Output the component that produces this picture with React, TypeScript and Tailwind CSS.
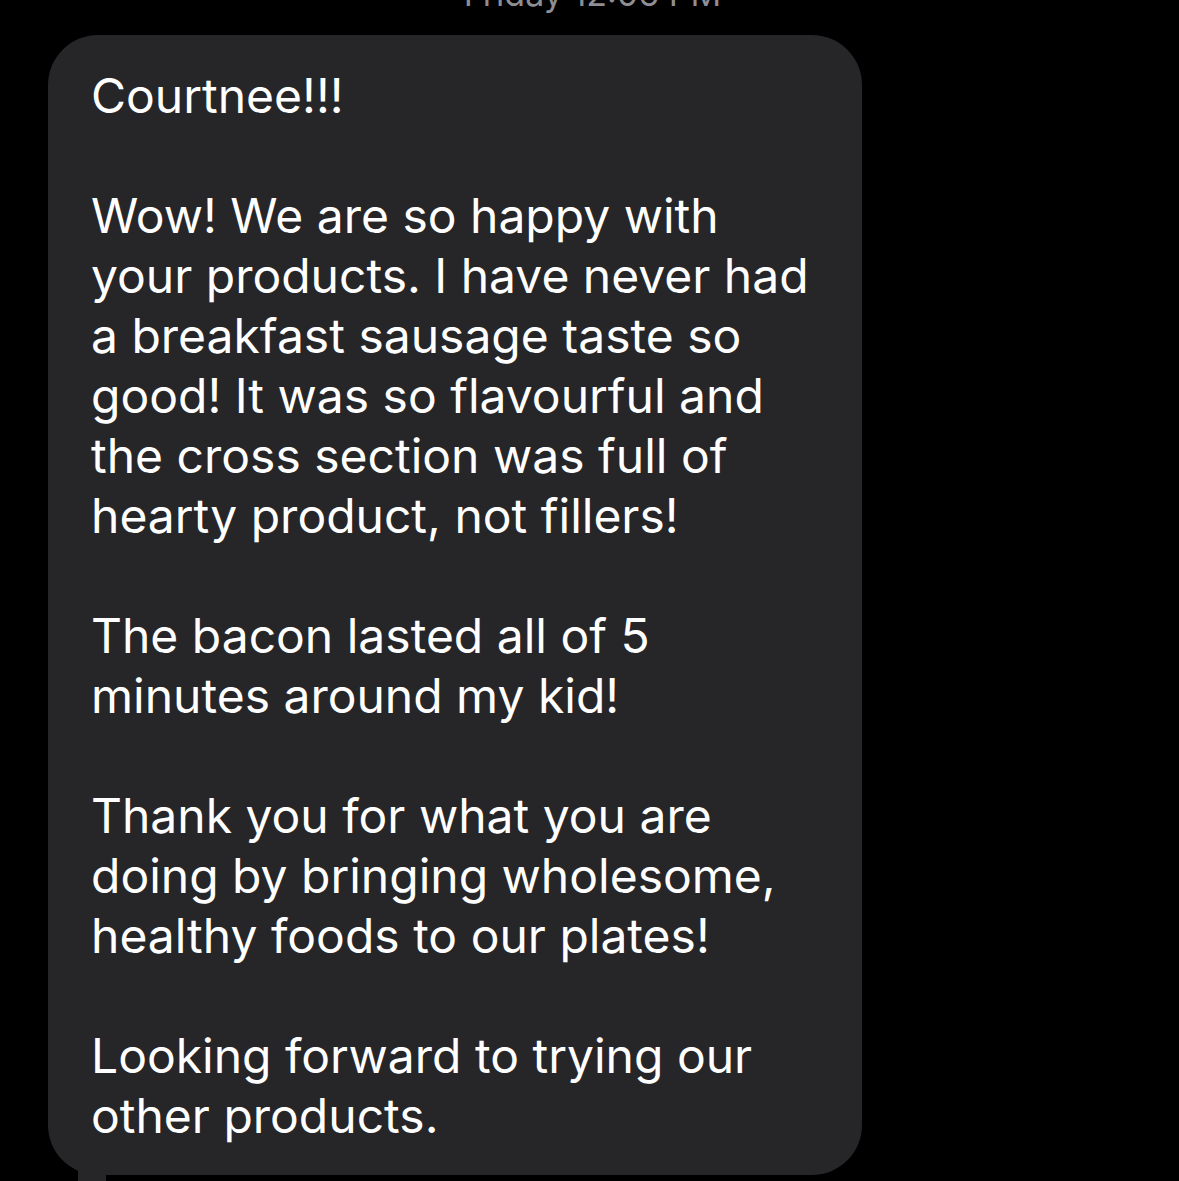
const paragraphs = [
  ["Courtnee!!!"],
  [
    "Wow! We are so happy with",
    "your products. I have never had",
    "a breakfast sausage taste so",
    "good! It was so flavourful and",
    "the cross section was full of",
    "hearty product, not fillers!",
  ],
  ["The bacon lasted all of 5", "minutes around my kid!"],
  [
    "Thank you for what you are",
    "doing by bringing wholesome,",
    "healthy foods to our plates!",
  ],
  ["Looking forward to trying our", "other products."],
]

const App = () => {
  return (
    <div
      className="h-[1181px] w-[1179px] overflow-hidden bg-black"
      style={{ fontFamily: "Inter, 'Noto Sans', sans-serif" }}
    >
      <div className="-mt-[23px] h-[58px] pl-[6px] text-center text-[34px] leading-[34px] text-[#8e8e93]">
        Friday 12:06 PM
      </div>
      <div className="relative ml-[48px] w-[814px] rounded-[50px] bg-[#262629] pl-[43px] pr-[20px] pt-[31px] pb-[29px] text-white">
        <div className="flex flex-col gap-[60px] text-[48px] leading-[60px]">
          {paragraphs.map((p, i) => (
            <div key={i}>
              {p.map((line) => (
                <div key={line} className="whitespace-nowrap">
                  {line}
                </div>
              ))}
            </div>
          ))}
        </div>
        <div className="absolute bottom-[-20px] left-[30px] h-[45px] w-[28px] rounded-tl-[20px] bg-[#262629]" />
      </div>
    </div>
  )
}

export default App
